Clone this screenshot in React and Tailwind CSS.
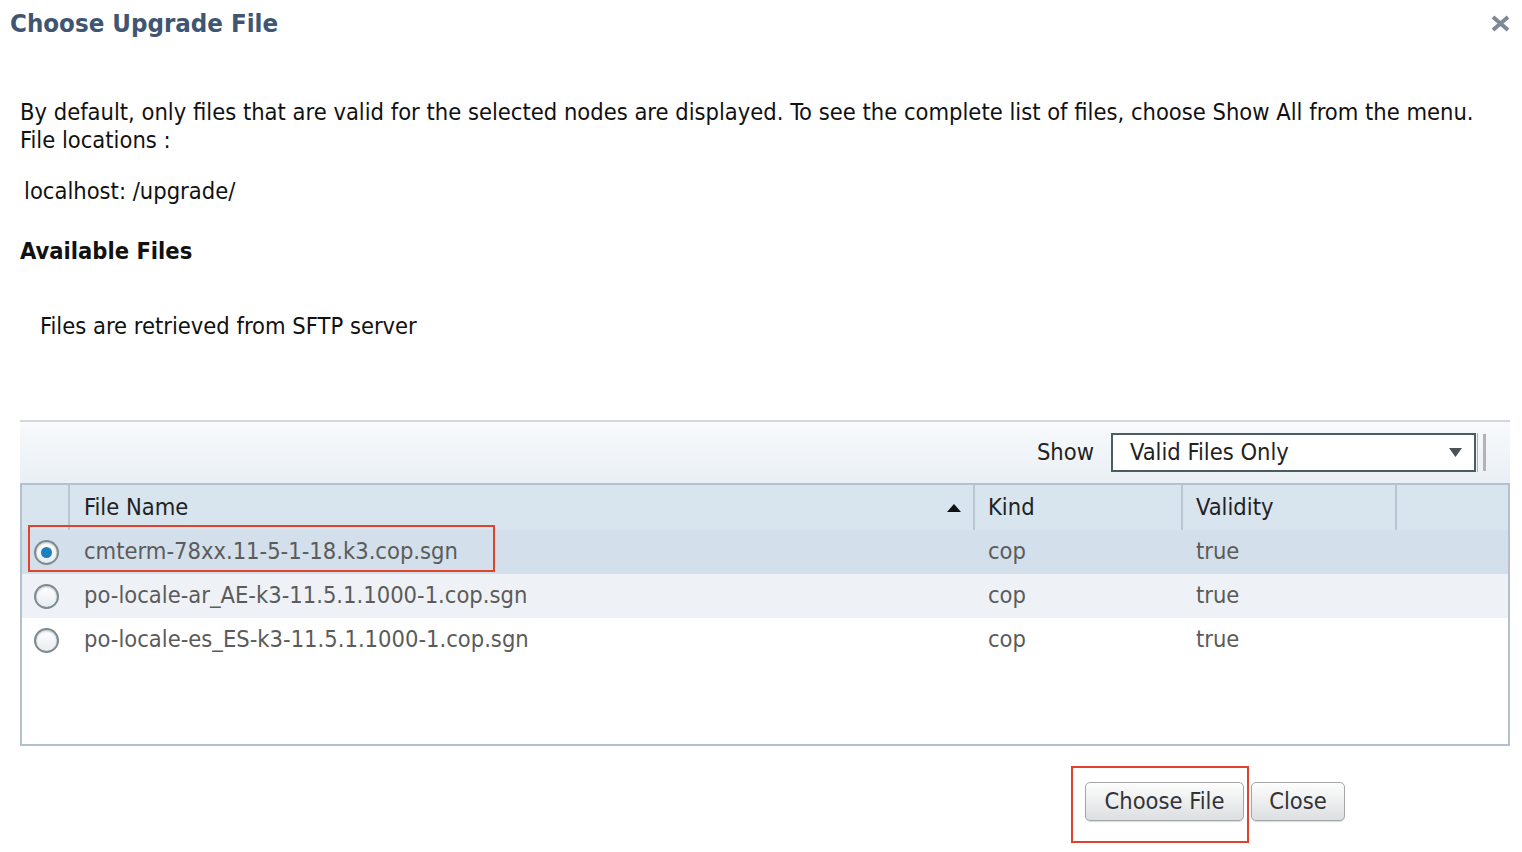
import React, { useState } from "react";

const files = [
  { name: "cmterm-78xx.11-5-1-18.k3.cop.sgn", kind: "cop", valid: "true" },
  { name: "po-locale-ar_AE-k3-11.5.1.1000-1.cop.sgn", kind: "cop", valid: "true" },
  { name: "po-locale-es_ES-k3-11.5.1.1000-1.cop.sgn", kind: "cop", valid: "true" },
];

const Radio = ({ checked }) => (
  <span className="flex h-[25px] w-[25px] items-center justify-center rounded-full border-2 border-[#7d8a93] bg-gradient-to-b from-[#ffffff] to-[#e9edf0] shadow-[inset_0_1px_2px_rgba(0,0,0,0.25)]">
    {checked && <span className="h-[11px] w-[11px] rounded-full bg-[#1b7fc0]" />}
  </span>
);

const App = () => {
  const [selected, setSelected] = useState(0);

  return (
    <div
      className="relative h-[852px] w-[1522px] overflow-hidden bg-white text-[#111]"
      style={{ fontFamily: '"DejaVu Sans Condensed", "DejaVu Sans", sans-serif' }}
    >
      {/* title bar */}
      <div className="flex items-start justify-between pl-[10px] pr-[12px] pt-[7px]">
        <h1 className="text-[25.6px] font-bold leading-[32px] text-[#3f5672]">Choose Upgrade File</h1>
        <svg className="mt-[8px]" width="19" height="17" viewBox="0 0 19 17">
          <path d="M2 2 L17 15 M17 2 L2 15" stroke="#7d8994" strokeWidth="4" strokeLinecap="butt" />
        </svg>
      </div>

      <div className="pl-[20px] pr-[12px]">
        <p className="mt-[59px] text-[23.5px] leading-[28px]">
          By default, only files that are valid for the selected nodes are displayed. To see the complete list of files,
          choose Show All from the menu.
          <br />
          File locations :
        </p>
        <p className="ml-[4px] mt-[23px] text-[23.5px] leading-[28px]">localhost: /upgrade/</p>
        <h2 className="mt-[32px] text-[23.5px] font-bold leading-[28px]">Available Files</h2>
        <p className="ml-[20px] mt-[47px] text-[23.5px] leading-[28px]">Files are retrieved from SFTP server</p>

        {/* toolbar */}
        <div className="mt-[80px] flex h-[63px] items-center justify-end border-t-2 border-[#d3d7db] bg-gradient-to-b from-[#f8fafc] to-[#e9eff4] pr-[24px]">
          <span className="mr-[17px] text-[23.5px] text-[#222]">Show</span>
          <div className="flex h-[39px] w-[365px] items-center justify-between border-2 border-[#4d5b63] bg-white pl-[17px] pr-[12px]">
            <span className="text-[23.5px] text-[#222]">Valid Files Only</span>
            <svg width="13" height="9" viewBox="0 0 13 9">
              <path d="M0 0 H13 L6.5 9 Z" fill="#4a5358" />
            </svg>
          </div>
          <span className="ml-[1px] h-[39px] w-[1px] bg-[#5fd0e8]" />
          <span className="ml-[5px] h-[37px] w-[3px] bg-[#b0b4b8]" />
        </div>

        {/* table */}
        <div className="h-[263px] border-2 border-[#b3c1ce] bg-white">
          <div className="grid h-[45px] grid-cols-[48px_905px_208px_214px_1fr] bg-[#d8e4ee] text-[23.5px] text-[#222]">
            <div className="border-r-2 border-[#b8c6d3]" />
            <div className="flex items-center justify-between border-r-2 border-[#b8c6d3] pl-[14px] pr-[12px]">
              <span>File Name</span>
              <svg width="14" height="8" viewBox="0 0 14 8">
                <path d="M0 8 H14 L7 0 Z" fill="#111" />
              </svg>
            </div>
            <div className="flex items-center border-r-2 border-[#b8c6d3] pl-[13px]">Kind</div>
            <div className="flex items-center border-r-2 border-[#b8c6d3] pl-[13px]">Validity</div>
            <div />
          </div>
          {files.map((f, i) => (
            <div
              key={f.name}
              onClick={() => setSelected(i)}
              className={`grid h-[44px] cursor-pointer grid-cols-[48px_905px_208px_214px_1fr] items-center text-[23.5px] text-[#5b5b5b] ${
                i === selected ? "bg-[#d3dfea]" : i % 2 === 1 ? "bg-[#eef2f6]" : "bg-white"
              }`}
            >
              <div className="flex justify-end pr-[11px]">
                <Radio checked={i === selected} />
              </div>
              <div className="pl-[14px]">{f.name}</div>
              <div className="pl-[13px]">{f.kind}</div>
              <div className="pl-[13px]">{f.valid}</div>
              <div />
            </div>
          ))}
        </div>

        {/* buttons */}
        <div className="mt-[36px] flex justify-end gap-[7px] pr-[165px]">
          <button className="h-[39px] w-[159px] rounded-[5px] border border-[#a3a7aa] bg-gradient-to-b from-[#fdfdfd] to-[#dcdfe1] text-[23.5px] text-[#333] shadow-[0_1px_1px_rgba(0,0,0,0.15)]">
            Choose File
          </button>
          <button className="h-[39px] w-[94px] rounded-[5px] border border-[#a3a7aa] bg-gradient-to-b from-[#fdfdfd] to-[#dcdfe1] text-[23.5px] text-[#333] shadow-[0_1px_1px_rgba(0,0,0,0.15)]">
            Close
          </button>
        </div>
      </div>

      {/* annotation boxes */}
      <div className="pointer-events-none absolute left-[28px] top-[525px] h-[47px] w-[467px] border-2 border-[#e0432c]" />
      <div className="pointer-events-none absolute left-[1071px] top-[766px] h-[77px] w-[178px] border-2 border-[#e0432c]" />
    </div>
  );
};

export default App;
